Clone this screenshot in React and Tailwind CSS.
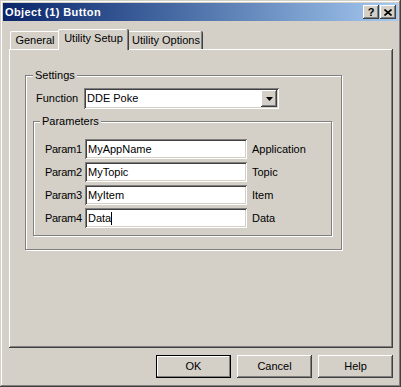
import React from 'react';

const raised =
  'shadow-[inset_-1px_-1px_#404040,inset_1px_1px_#fff,inset_-2px_-2px_#808080,inset_2px_2px_#d4d0c8]';
const sunken =
  'shadow-[inset_1px_1px_#808080,inset_-1px_-1px_#fff,inset_2px_2px_#404040,inset_-2px_-2px_#d4d0c8]';
const etched = 'border border-[#808080] shadow-[inset_1px_1px_#fff,1px_1px_#fff]';

const params = [
  { label: 'Param1', value: 'MyAppName', hint: 'Application' },
  { label: 'Param2', value: 'MyTopic', hint: 'Topic' },
  { label: 'Param3', value: 'MyItem', hint: 'Item' },
  { label: 'Param4', value: 'Data', hint: 'Data', caret: true },
];

const TitleButton = ({ children }) => (
  <div className={`flex h-[14px] w-[16px] items-center justify-center bg-[#d4d0c8] ${raised}`}>
    {children}
  </div>
);

const App = () => {
  return (
    <div className="flex h-[387px] w-[401px] flex-col bg-[#d4d0c8] p-[3px] font-['Liberation_Sans',Arial,sans-serif] text-[11px] leading-none text-black shadow-[inset_-1px_-1px_#404040,inset_1px_1px_#d4d0c8,inset_-2px_-2px_#808080,inset_2px_2px_#fff]">
      {/* title bar */}
      <div className="flex h-[18px] items-center justify-between bg-gradient-to-r from-[#0a246a] to-[#a6caf0] pl-[2px] pr-[2px]">
        <span className="text-[11px] font-bold tracking-[0.4px] text-white">Object (1) Button</span>
        <div className="flex gap-[1px]">
          <TitleButton>
            <span className="mt-[1px] text-[11px] font-bold">?</span>
          </TitleButton>
          <TitleButton>
            <svg width="8" height="7" viewBox="0 0 8 7">
              <path d="M0.5 0.5 L7.5 6.5 M7.5 0.5 L0.5 6.5" stroke="#000" strokeWidth="1.6" />
            </svg>
          </TitleButton>
        </div>
      </div>

      {/* tabs */}
      <div className="ml-[7px] mt-[8px] flex h-[20px] items-end">
        <div className="flex h-[18px] w-[50px] items-center justify-center rounded-tl-[2px] bg-[#d4d0c8] pt-[1px] shadow-[inset_1px_0_#fff,inset_0_1px_#fff]">
          General
        </div>
        <div className="relative z-10 -mb-px -ml-[2px] flex h-[21px] w-[71px] items-center justify-center rounded-t-[2px] bg-[#d4d0c8] pb-[2px] shadow-[inset_-1px_0_#404040,inset_1px_0_#fff,inset_0_1px_#fff,inset_-2px_0_#808080]">
          Utility Setup
        </div>
        <div className="flex h-[18px] w-[74px] items-center justify-center rounded-tr-[2px] bg-[#d4d0c8] pt-[1px] shadow-[inset_-1px_0_#404040,inset_0_1px_#fff,inset_-2px_0_#808080]">
          Utility Options
        </div>
      </div>

      {/* tab panel */}
      <div className="ml-[6px] h-[299px] w-[384px] pl-[16px] pt-[26px] shadow-[inset_-1px_-1px_#404040,inset_1px_1px_#fff,inset_-2px_-2px_#808080]">
        <div className={`relative h-[175px] w-[317px] ${etched}`}>
          <span className="absolute -top-[6px] left-[7px] bg-[#d4d0c8] px-[2px]">Settings</span>

          <div className="flex items-center pl-[10px] pt-[12px]">
            <span className="w-[48px]">Function</span>
            <div className={`flex h-[21px] w-[195px] items-center justify-between bg-white pl-[3px] pr-[2px] ${sunken}`}>
              <span>DDE Poke</span>
              <div className={`flex h-[17px] w-[16px] items-center justify-center bg-[#d4d0c8] ${raised}`}>
                <svg width="7" height="4" viewBox="0 0 7 4">
                  <path d="M0 0 H7 L3.5 4 Z" fill="#000" />
                </svg>
              </div>
            </div>
          </div>

          <div className={`relative ml-[7px] mt-[12px] h-[115px] w-[299px] ${etched}`}>
            <span className="absolute -top-[6px] left-[6px] bg-[#d4d0c8] px-[2px]">Parameters</span>
            <div className="flex flex-col gap-[3px] pl-[11px] pt-[17px]">
              {params.map((p) => (
                <div key={p.label} className="flex items-center">
                  <span className="w-[40px] tracking-[-0.3px]">{p.label}</span>
                  <div className={`flex h-[20px] w-[162px] items-center bg-white pl-[3px] ${sunken}`}>
                    <span>{p.value}</span>
                    {p.caret && <span className="h-[13px] w-px bg-black" />}
                  </div>
                  <span className="ml-[5px]">{p.hint}</span>
                </div>
              ))}
            </div>
          </div>
        </div>
      </div>

      {/* buttons */}
      <div className="ml-[6px] mt-[7px] flex w-[384px] justify-end gap-[6px]">
        <button
          type="button"
          className="flex h-[23px] w-[75px] items-center justify-center border border-black bg-[#d4d0c8] shadow-[inset_-1px_-1px_#808080,inset_1px_1px_#fff]"
        >
          OK
        </button>
        <button
          type="button"
          className={`flex h-[23px] w-[75px] items-center justify-center bg-[#d4d0c8] ${raised}`}
        >
          Cancel
        </button>
        <button
          type="button"
          className={`flex h-[23px] w-[75px] items-center justify-center bg-[#d4d0c8] ${raised}`}
        >
          Help
        </button>
      </div>
    </div>
  );
};

export default App;
